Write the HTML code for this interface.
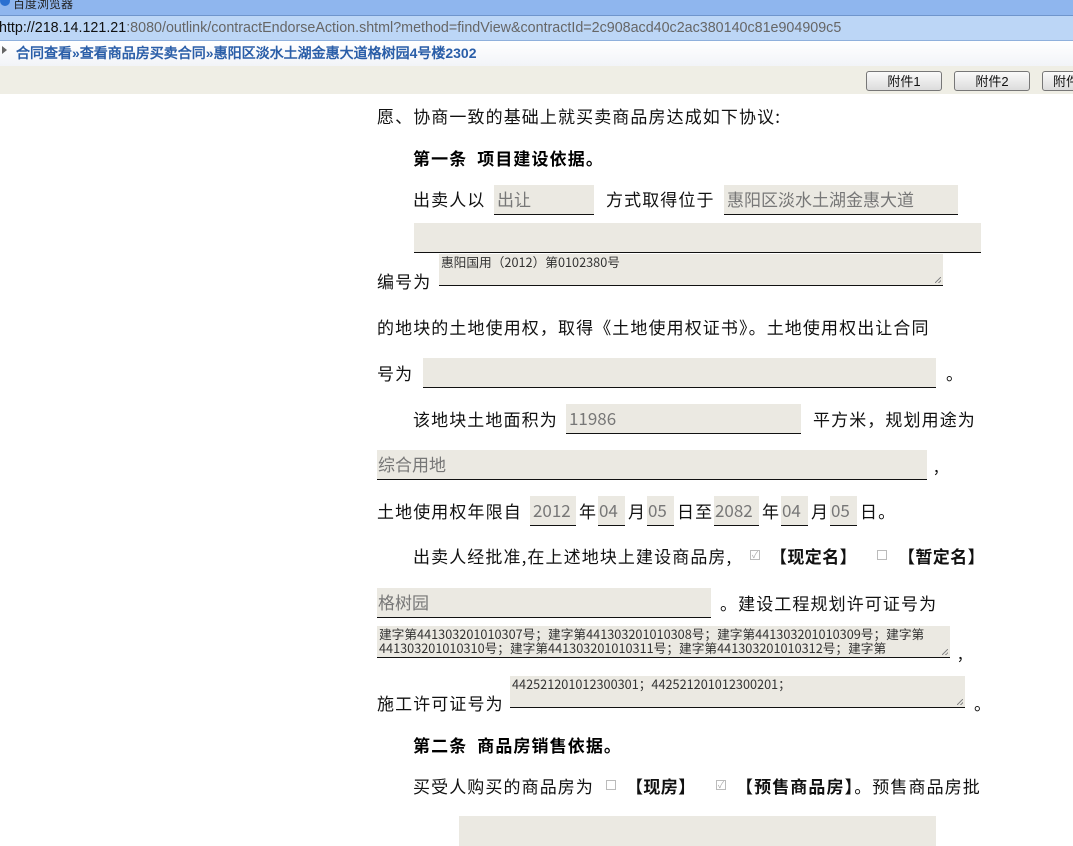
<!DOCTYPE html>
<html><head><meta charset="utf-8">
<style>
body{margin:0;width:1073px;height:821px;overflow:hidden;background:#fff;font-family:"Liberation Sans","Noto Sans CJK SC",sans-serif;position:relative}
.a{position:absolute;white-space:nowrap}
.t{position:absolute;white-space:nowrap;font-size:17px;letter-spacing:1.1px;color:#111;line-height:20px;font-family:"WenQuanYi Zen Hei","Noto Sans CJK SC",sans-serif}
.f{position:absolute;background:#ebe9e2;border-bottom:1.5px solid #111;box-sizing:border-box;color:#777;font-size:17px;padding-left:3px;line-height:28px;font-family:"WenQuanYi Zen Hei","Noto Sans CJK SC",sans-serif;white-space:nowrap;overflow:hidden}
.ta{position:absolute;background:#ebe9e2;border-bottom:1.5px solid #111;box-sizing:border-box;color:#333;font-size:12.7px;line-height:14px;padding:1px 2px;font-family:"WenQuanYi Zen Hei","Noto Sans CJK SC",monospace;white-space:nowrap;overflow:hidden}
.ta:after{content:"";position:absolute;right:2px;bottom:2px;width:6px;height:6px;background:linear-gradient(135deg,transparent 45%,#888 45%,#888 55%,transparent 55%,transparent 75%,#888 75%,#888 85%,transparent 85%)}
.cb{position:absolute;width:10px;height:10px;border:1px solid #bbb;background:#fff;box-sizing:border-box;font-size:9px;line-height:8px;color:#aaa;text-align:center}
.btn{position:absolute;top:71px;height:20px;width:76px;border:1px solid #777;border-radius:3px;background:linear-gradient(#fafafa,#dcdcdc);font-size:13px;line-height:19px;text-align:center;color:#111;font-family:"WenQuanYi Zen Hei",sans-serif;box-sizing:border-box}
</style></head><body>
<div class="a" style="left:0;top:0;width:1073px;height:15px;background:#8fb6ee;border-bottom:1px solid #6f95cc"></div>
<div class="a" style="left:0;top:-4px;width:10px;height:10px;border-radius:50%;background:#2a6fd0"></div>
<div class="a" style="left:13px;top:-5px;font-size:12px;color:#222;font-family:'WenQuanYi Zen Hei',sans-serif">百度浏览器</div>
<div class="a" style="left:0;top:16px;width:1073px;height:24px;background:#bcd6f6;border-bottom:1px solid #8fb0dc"></div>
<div class="a" style="left:-1px;top:18px;font-size:14.3px;line-height:20px;color:#666"><span style="color:#111">http://218.14.121.21</span>:8080/outlink/contractEndorseAction.shtml?method=findView&amp;contractId=2c908acd40c2ac380140c81e904909c5</div>
<div class="a" style="left:0;top:41px;width:1073px;height:25px;background:linear-gradient(#fff,#f2f4f8)"></div>
<div class="a" style="left:2px;top:46px;width:0;height:0;border-left:5px solid #666;border-top:4px solid transparent;border-bottom:4px solid transparent"></div>
<div class="a" style="left:16px;top:43px;font-size:14px;line-height:20px;font-weight:bold;color:#2a5ea8;font-family:'WenQuanYi Zen Hei',sans-serif">合同查看»查看商品房买卖合同»惠阳区淡水土湖金惠大道格树园4号楼2302</div>
<div class="a" style="left:0;top:66px;width:1073px;height:28px;background:#efeee5"></div>
<div class="btn" style="left:866px">附件1</div>
<div class="btn" style="left:954px">附件2</div>
<div class="btn" style="left:1042px;text-align:left;padding-left:10px">附件3</div>

<div class="t" style="left:377px;top:106px">愿、协商一致的基础上就买卖商品房达成如下协议:</div>
<div class="t" style="left:413px;top:148px;font-weight:bold;color:#000">第一条&nbsp; 项目建设依据。</div>
<div class="t" style="left:413px;top:189px">出卖人以</div>
<div class="f" style="left:494px;top:185px;width:100px;height:30px">出让</div>
<div class="t" style="left:606px;top:189px">方式取得位于</div>
<div class="f" style="left:724px;top:185px;width:234px;height:30px">惠阳区淡水土湖金惠大道</div>
<div class="f" style="left:414px;top:223px;width:567px;height:30px"></div>
<div class="t" style="left:377px;top:271px">编号为</div>
<div class="ta" style="left:439px;top:254px;width:504px;height:32px">惠阳国用（2012）第0102380号</div>
<div class="t" style="left:377px;top:317px">的地块的土地使用权，取得《土地使用权证书》。土地使用权出让合同</div>
<div class="t" style="left:377px;top:363px">号为</div>
<div class="f" style="left:423px;top:358px;width:513px;height:30px"></div>
<div class="t" style="left:946px;top:363px">。</div>
<div class="t" style="left:413px;top:409px">该地块土地面积为</div>
<div class="f" style="left:566px;top:404px;width:235px;height:30px">11986</div>
<div class="t" style="left:813px;top:409px">平方米，规划用途为</div>
<div class="f" style="left:377px;top:450px;width:550px;height:30px;padding-left:1px">综合用地</div>
<div class="t" style="left:934px;top:455px">,</div>
<div class="t" style="left:377px;top:501px">土地使用权年限自</div>
<div class="f" style="left:530px;top:496px;width:46px;height:30px">2012</div>
<div class="t" style="left:579px;top:501px">年</div>
<div class="f" style="left:598px;top:496px;width:27px;height:30px;padding-left:1px">04</div>
<div class="t" style="left:628px;top:501px">月</div>
<div class="f" style="left:647px;top:496px;width:27px;height:30px;padding-left:1px">05</div>
<div class="t" style="left:677px;top:501px">日至</div>
<div class="f" style="left:714px;top:496px;width:45px;height:30px;padding-left:1px">2082</div>
<div class="t" style="left:762px;top:501px">年</div>
<div class="f" style="left:781px;top:496px;width:27px;height:30px;padding-left:1px">04</div>
<div class="t" style="left:811px;top:501px">月</div>
<div class="f" style="left:830px;top:496px;width:27px;height:30px;padding-left:1px">05</div>
<div class="t" style="left:860px;top:501px">日。</div>
<div class="t" style="left:413px;top:546px">出卖人经批准,在上述地块上建设商品房,</div>
<div class="cb" style="left:750px;top:550px">✓</div>
<div class="t" style="left:770px;top:546px;font-weight:bold;letter-spacing:0.4px">【现定名】</div>
<div class="cb" style="left:877px;top:550px"></div>
<div class="t" style="left:898px;top:546px;font-weight:bold;letter-spacing:0.4px">【暂定名】</div>
<div class="f" style="left:377px;top:588px;width:334px;height:30px;padding-left:1px">格树园</div>
<div class="t" style="left:720px;top:593px">。建设工程规划许可证号为</div>
<div class="ta" style="left:377px;top:626px;width:573px;height:32px;line-height:14px">建字第441303201010307号；建字第441303201010308号；建字第441303201010309号；建字第<br>441303201010310号；建字第441303201010311号；建字第441303201010312号；建字第</div>
<div class="t" style="left:958px;top:642px">,</div>
<div class="t" style="left:377px;top:693px">施工许可证号为</div>
<div class="ta" style="left:510px;top:676px;width:455px;height:32px">442521201012300301；442521201012300201；</div>
<div class="t" style="left:974px;top:693px">。</div>
<div class="t" style="left:413px;top:735px;font-weight:bold;color:#000">第二条&nbsp; 商品房销售依据。</div>
<div class="t" style="left:413px;top:776px">买受人购买的商品房为</div>
<div class="cb" style="left:606px;top:780px"></div>
<div class="t" style="left:626px;top:776px;font-weight:bold;letter-spacing:0.4px">【现房】</div>
<div class="cb" style="left:716px;top:780px">✓</div>
<div class="t" style="left:736px;top:776px"><b>【预售商品房】</b>。预售商品房批</div>
<div class="f" style="left:459px;top:816px;width:477px;height:30px;border:none"></div>
</body></html>
